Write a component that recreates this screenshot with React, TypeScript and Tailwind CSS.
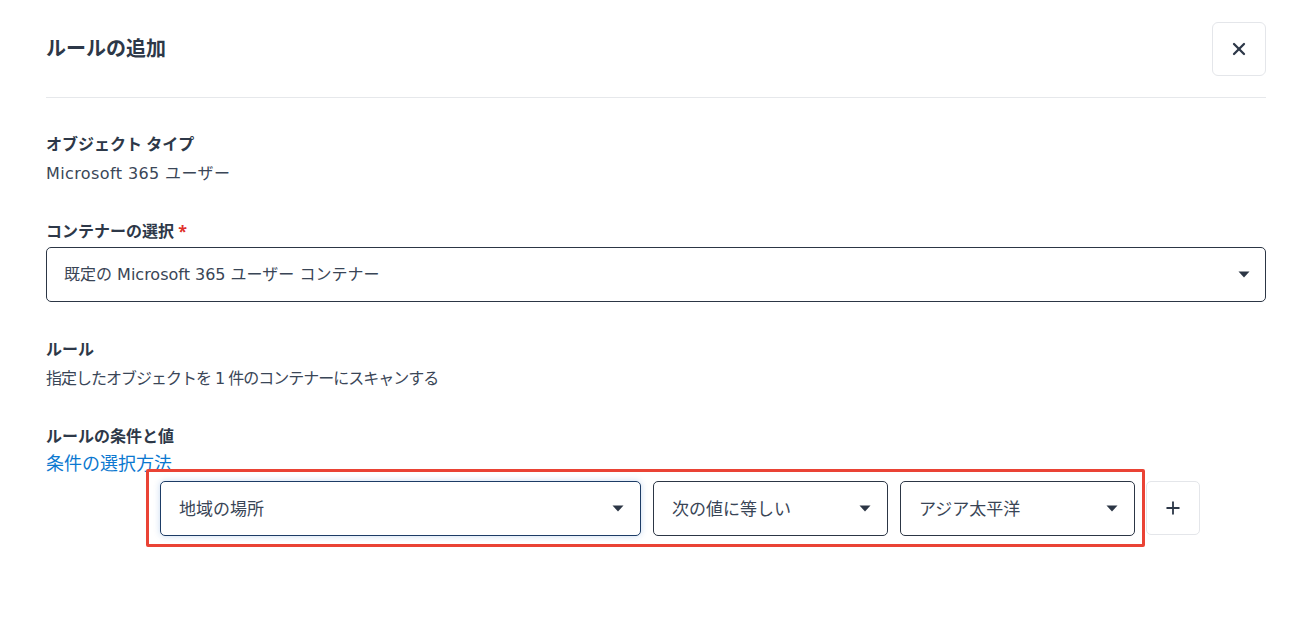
import { X, Plus } from "lucide-react";

const font = { fontFamily: '"DejaVu Sans", "Noto Sans CJK JP", sans-serif' };
const labelFont = { fontFamily: '"Open Sans", "Noto Sans CJK JP", sans-serif' };

function Caret() {
  return (
    <svg width="12" height="7" viewBox="0 0 12 7" className="shrink-0">
      <path d="M0.5 0.5h11L6 6.5z" fill="#2c3645" />
    </svg>
  );
}

function Select({ value, className }: { value: string; className: string }) {
  return (
    <div className={`flex h-[55px] items-center justify-between rounded-[5px] border bg-white pl-[18px] pr-[16px] text-[17px] text-[#394556] ${className}`}>
      <span>{value}</span>
      <Caret />
    </div>
  );
}

export default function App() {
  return (
    <main style={font} className="min-h-screen bg-white pl-[46px] pr-[23px] pt-[22px] text-[#2f3a4a]">
      <header className="flex items-center justify-between border-b border-[#e6e8eb] pb-[21px]">
        <h1 style={labelFont} className="text-xl font-bold text-[#2d3848]">ルールの追加</h1>
        <button className="grid h-[54px] w-[54px] place-items-center rounded-md border border-[#e4e6ea] bg-white text-[#2d3848]">
          <X size={20} strokeWidth={2.7} />
        </button>
      </header>

      <section className="mt-[34px] leading-6">
        <h2 style={labelFont} className="text-base font-bold text-[#2d3848]">オブジェクト タイプ</h2>
        <p className="mt-[6px] text-base tracking-[0.4px] text-[#3a4657]">Microsoft 365 ユーザー</p>
      </section>

      <section className="mt-[33px] leading-6">
        <h2 style={labelFont} className="text-base font-bold text-[#2d3848]">
          コンテナーの選択 <span className="text-[#e0312b]">*</span>
        </h2>
        <div className="mt-[4px] flex h-[55px] items-center justify-between rounded-[5px] border border-[#2c3645] pl-[17px] pr-[15px] text-base text-[#394556]">
          <span>既定の Microsoft 365 ユーザー コンテナー</span>
          <Caret />
        </div>
      </section>

      <section className="mt-[35px] leading-6">
        <h2 style={labelFont} className="text-base font-bold text-[#2d3848]">ルール</h2>
        <p className="mt-[6px] text-base tracking-[-1px] text-[#3a4657]">指定したオブジェクトを 1 件のコンテナーにスキャンする</p>
      </section>

      <section className="mt-[33px] leading-6">
        <h2 style={labelFont} className="text-base font-bold text-[#2d3848]">ルールの条件と値</h2>
        <a href="#" className="mt-[4px] block w-fit text-[18px] text-[#0b78d0]">条件の選択方法</a>
        <div className="relative -mt-[7px] ml-[100px] flex items-center">
          <div className="flex gap-3 rounded-[2px] border-[3px] border-[#ea4335] pb-[8px] pl-[11px] pr-[7px] pt-[9px]">
            <Select value="地域の場所" className="w-[481px] border-[#1d3c66] shadow-[0_0_6px_rgba(40,110,200,0.25)]" />
            <Select value="次の値に等しい" className="w-[235px] border-[#2c3645]" />
            <Select value="アジア太平洋" className="w-[235px] border-[#2c3645]" />
          </div>
          <button className="ml-[1px] grid h-[54px] w-[54px] place-items-center rounded-[5px] border border-[#e4e6ea] bg-white text-[#2d3848]">
            <Plus size={20} strokeWidth={2.2} />
          </button>
        </div>
      </section>
    </main>
  );
}
